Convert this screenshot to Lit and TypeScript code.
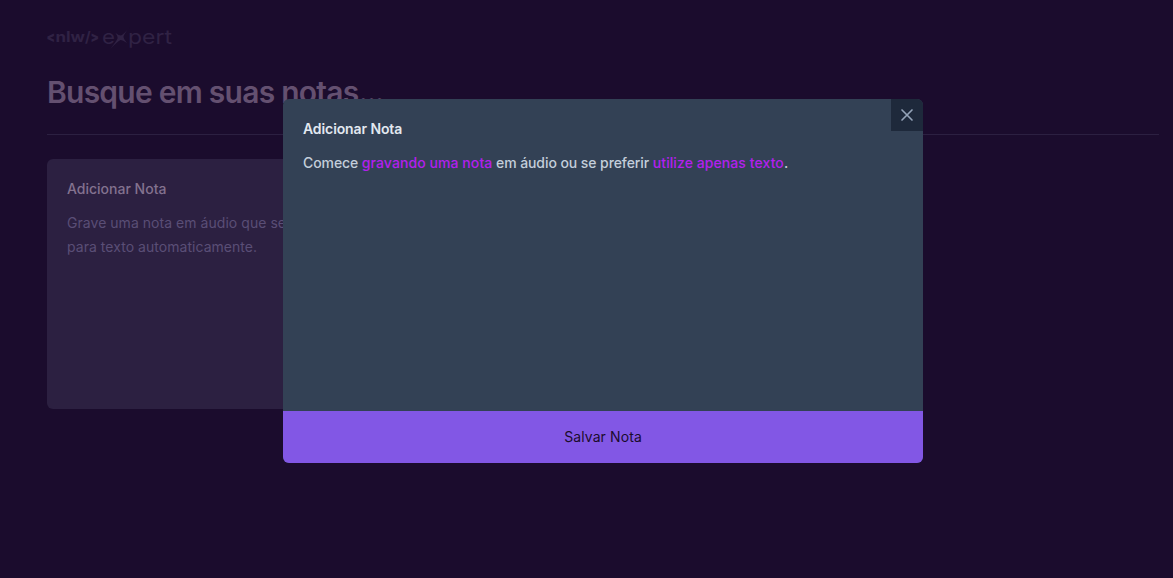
import { LitElement, html, css, svg } from "lit";
import { customElement } from "lit/decorators.js";

@customElement("brand-logo")
class BrandLogo extends LitElement {
  static styles = css`
    :host { display: block; height: 24px; }
    svg { display: block; overflow: visible; }
    text, .star { fill: #302244; }
    .tag { font: 700 14.500px Inter, sans-serif; }
    .angle { font-weight: 900; }
    .word { font: 400 19.500px Inter, sans-serif; }
  `;
  render() {
    return html`<svg width="126" height="24" viewBox="0 0 126 24" role="img">
      ${svg`<text class="tag angle" x="-0.500" y="17" textLength="8.500" lengthAdjust="spacingAndGlyphs">&lt;</text>
      <text class="tag" x="8.500" y="17" textLength="29.500" lengthAdjust="spacingAndGlyphs">nlw</text>
      <text class="tag" x="38" y="17">/</text>
      <text class="tag angle" x="43.500" y="17" textLength="8.500" lengthAdjust="spacingAndGlyphs">&gt;</text>
      <text class="word" x="55" y="18.500" textLength="13" lengthAdjust="spacingAndGlyphs">e</text>
      <path class="star" d="M83 2 Q77.500 8 76.500 11.500 Q76.500 14 80 18 Q75.500 15 73.500 15 Q70 17 63 24 Q69 17 70.500 13.500 Q71 11.500 68.500 8 Q72 10.500 74 10.500 Q77 9 83 2 Z"/>
      <text class="word" x="81" y="18.500" textLength="44" lengthAdjust="spacingAndGlyphs">pert</text>`}
    </svg>`;
  }
}

@customElement("note-card")
class NoteCard extends LitElement {
  static styles = css`
    :host { display: flex; flex-direction: column; gap: 12px; box-sizing: border-box; height: 250px; padding: 20px; border-radius: 6px; background: #2c2041; }
    .title { font-size: 14px; line-height: 20px; font-weight: 500; color: #83728f; }
    .body { margin: 0; font-size: 14px; line-height: 24px; letter-spacing: 0.04px; color: #5a4e76; }
  `;
  render() {
    return html`<span class="title">Adicionar Nota</span>
      <p class="body">Grave uma nota em áudio que será convertida para texto automaticamente.</p>`;
  }
}

@customElement("note-dialog")
class NoteDialog extends LitElement {
  static styles = css`
    :host { position: relative; display: flex; flex-direction: column; box-sizing: border-box; width: 640px; height: 364px; border-radius: 6px; overflow: hidden; background: #334155; }
    .close { position: absolute; top: 0; right: 0; width: 32px; height: 32px; padding: 6px; box-sizing: border-box; border: 0; background: #1e293b; color: #94a3b8; }
    .close svg { display: block; }
    .content { flex: 1; display: flex; flex-direction: column; gap: 12px; padding: 20px; }
    .title { font-size: 14px; line-height: 20px; font-weight: 600; letter-spacing: -0.1px; color: #e2e8f0; }
    .body { margin: 0; font-size: 14px; line-height: 24px; font-weight: 500; letter-spacing: -0.08px; color: #c3cedb; }
    .link { padding: 0; border: 0; background: none; font: inherit; letter-spacing: 0.08px; color: #b31fee; }
    .save { height: 52px; padding: 0; border: 0; background: #8257e5; color: #1b0c2d; font: 400 14px/20px Inter, sans-serif; letter-spacing: 0.1px; }
  `;
  render() {
    return html`<button class="close" aria-label="Fechar">
        <svg width="20" height="20" viewBox="0 0 24 24" fill="none" stroke="currentColor" stroke-width="2" stroke-linecap="round"><path d="M18 6 6 18M6 6l12 12" /></svg>
      </button>
      <div class="content">
        <span class="title">Adicionar Nota</span>
        <p class="body">Comece <button class="link">gravando uma nota</button> em áudio ou se preferir <button class="link">utilize apenas texto</button>.</p>
      </div>
      <button class="save">Salvar Nota</button>`;
  }
}

@customElement("app-root")
class AppRoot extends LitElement {
  static styles = css`
    :host { display: block; position: relative; height: 578px; overflow: hidden; background: #1b0c2d; font-family: Inter, sans-serif; }
    .page { display: flex; flex-direction: column; gap: 24px; padding: 25px 14px 0 47px; }
    .search { margin-top: 1px; font-size: 30px; line-height: 36px; font-weight: 600; letter-spacing: -0.75px; color: #645070; }
    .dots { letter-spacing: -1.4px; }
    .rule { height: 1px; background: #2c2041; }
    .grid { display: grid; grid-template-columns: repeat(3, 1fr); gap: 24px; }
    .overlay { position: absolute; inset: 0; }
    note-dialog { margin: 99px 0 0 283px; }
  `;
  render() {
    return html`<main class="page">
        <brand-logo></brand-logo>
        <div class="search">Busque em suas notas<span class="dots">...</span></div>
        <div class="rule"></div>
        <div class="grid"><note-card></note-card></div>
      </main>
      <div class="overlay"><note-dialog></note-dialog></div>`;
  }
}
